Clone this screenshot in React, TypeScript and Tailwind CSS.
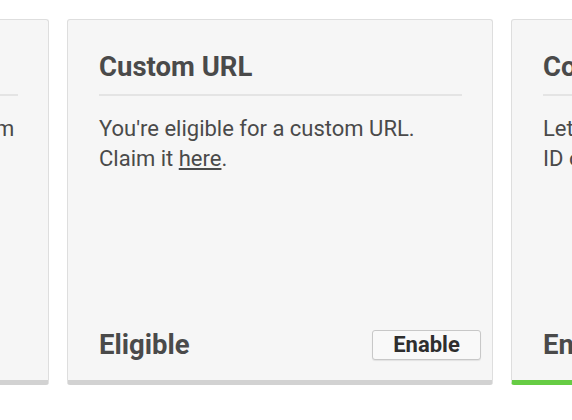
import clsx from 'clsx'

type Card = {
  title: string
  body: React.ReactNode
  status?: string
  action?: string
  active?: boolean
}

const cards: Card[] = [
  {
    title: 'Domain',
    body: (
      <>
        Connect your domain to the platform
        <br />
        profile page.
      </>
    ),
  },
  {
    title: 'Custom URL',
    body: (
      <>
        You're eligible for a custom URL.
        <br />
        Claim it <a className="underline">here</a>.
      </>
    ),
    status: 'Eligible',
    action: 'Enable',
  },
  {
    title: 'Connected ID',
    body: (
      <>
        Let friends find you by your
        <br />
        ID on other services.
      </>
    ),
    status: 'Enabled',
    active: true,
  },
]

function FeatureCard({ card }: { card: Card }) {
  return (
    <div
      className={clsx(
        'flex h-[366px] w-[426px] shrink-0 flex-col rounded-[3px] border border-b-[5px] border-[#dedede] bg-[#f6f6f6] pl-[31px] pr-[30px] pt-[29px] pb-[17px]',
        card.active ? 'border-b-[#66cc44]' : 'border-b-[#d2d2d2]',
      )}
    >
      <h2 className="border-b-2 border-[#e4e4e4] pb-[9px] text-[27.5px] font-bold leading-[36px] text-[#4a4a4a]">{card.title}</h2>
      <p className="mt-[18px] flex-1 text-[22px] leading-[30px] text-[#4a4a4a]">{card.body}</p>
      <div className="flex items-center justify-between">
        <span className="text-[27.5px] font-bold leading-[36px] text-[#4a4a4a]">{card.status}</span>
        {card.action && (
          <button className="-mr-[19px] h-[30px] w-[109px] rounded-[3px] border border-[#c8c8c8] bg-[#f9f9f9] text-[22px] font-bold leading-none text-[#2e2e2e] shadow-[0_1px_1px_rgba(0,0,0,0.08)]">
            {card.action}
          </button>
        )}
      </div>
    </div>
  )
}

export default function App() {
  return (
    <div className="h-[420px] w-[572px] overflow-hidden bg-white font-['Roboto',sans-serif]">
      <div className="ml-[-377px] mt-[19px] flex gap-[18px]">
        {cards.map((c) => (
          <FeatureCard key={c.title} card={c} />
        ))}
      </div>
    </div>
  )
}
